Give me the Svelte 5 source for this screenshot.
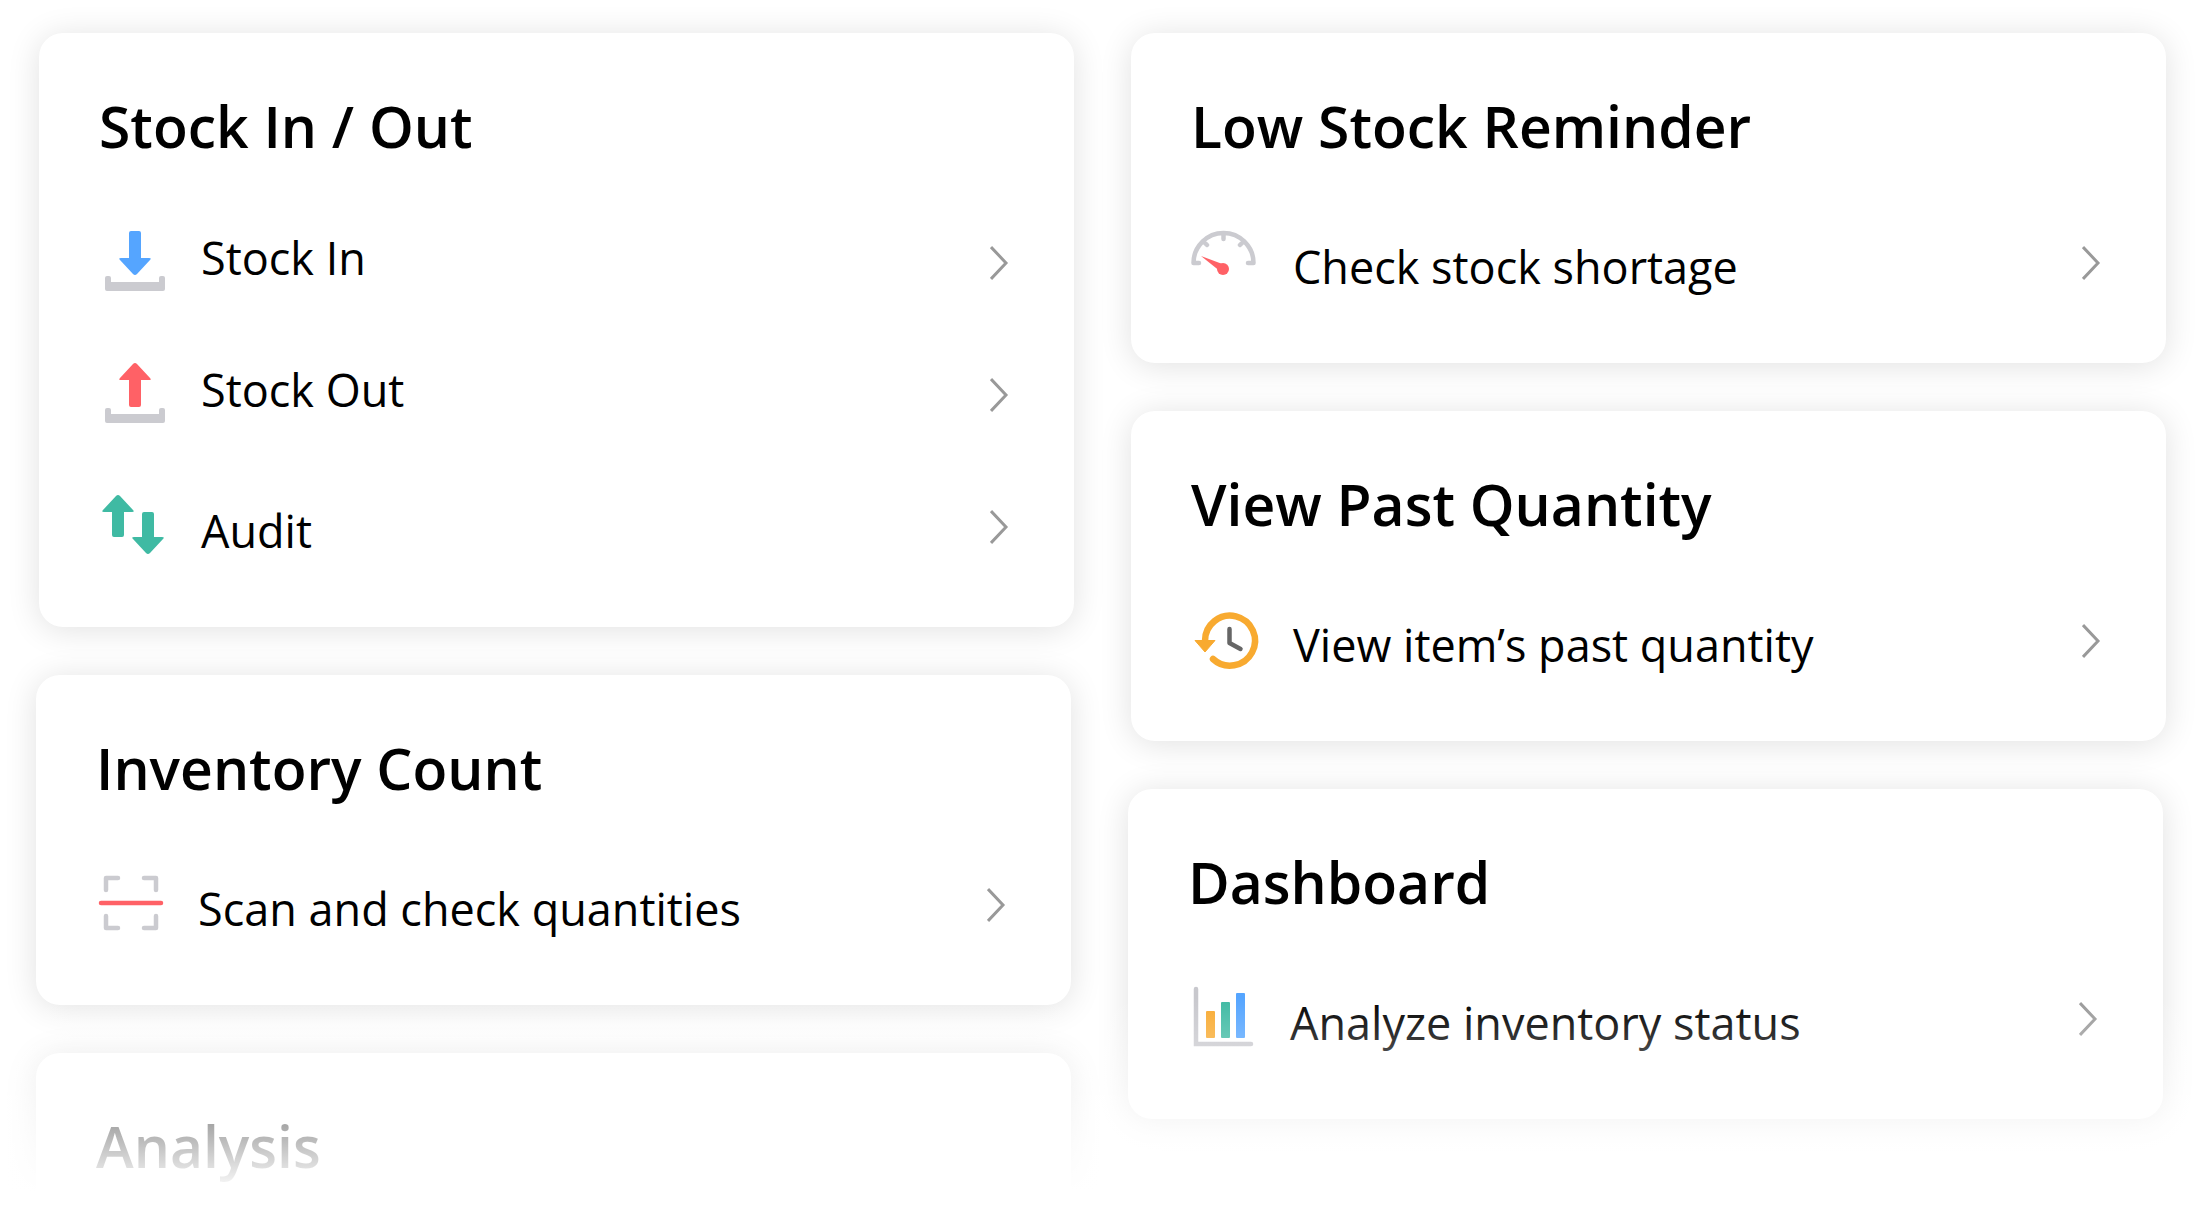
<script lang="ts">
  type Row = { icon: string; label: string; raised?: boolean };
  type Card = { title: string; shifted?: boolean; rows: Row[] };

  const columns: Card[][] = [
    [
      {
        title: 'Stock In / Out',
        rows: [
          { icon: 'in', label: 'Stock In', raised: true },
          { icon: 'out', label: 'Stock Out', raised: true },
          { icon: 'audit', label: 'Audit' },
        ],
      },
      { title: 'Inventory Count', shifted: true, rows: [{ icon: 'scan', label: 'Scan and check quantities' }] },
      { title: 'Analysis', shifted: true, rows: [] },
    ],
    [
      { title: 'Low Stock Reminder', rows: [{ icon: 'gauge', label: 'Check stock shortage' }] },
      { title: 'View Past Quantity', rows: [{ icon: 'history', label: 'View item’s past quantity' }] },
      { title: 'Dashboard', shifted: true, rows: [{ icon: 'chart', label: 'Analyze inventory status' }] },
    ],
  ];
</script>

<main>
  {#each columns as cards}
    <div class="column">
      {#each cards as card}
        <section class="card" class:shifted={card.shifted}>
          <h2>{card.title}</h2>
          {#each card.rows as row}
            <button type="button" class="row">
              <svg class="icon" viewBox="0 0 72 72" aria-hidden="true">
                {#if row.icon === 'in'}
                  <path fill="#55a5ff" d="M30 6q0-2 2-2h8q2 0 2 2v25h8q3 0 1 2L38 47q-2 2-4 0L21 33q-2-2 1-2h8z" />
                  <path fill="#cbcbd0" d="M8 49h2q2 0 2 2v4h48v-4q0-2 2-2h2q2 0 2 2v11q0 2-2 2H8q-2 0-2-2V51q0-2 2-2z" />
                {:else if row.icon === 'out'}
                  <path fill="#ff6166" d="M30 46q0 2 2 2h8q2 0 2-2V21h8q3 0 1-2L38 5q-2-2-4 0L21 19q-2 2 1 2h8z" />
                  <path fill="#cbcbd0" d="M8 49h2q2 0 2 2v4h48v-4q0-2 2-2h2q2 0 2 2v11q0 2-2 2H8q-2 0-2-2V51q0-2 2-2z" />
                {:else if row.icon === 'audit'}
                  <path fill="#3fbaa3" d="M13 44q0 2 2 2h8q2 0 2-2V21h8q3 0 1-2L21 5q-2-2-4 0L4 19q-2 2 1 2h8z" />
                  <path fill="#3fbaa3" d="M43 23q0-2 2-2h8q2 0 2 2v23h8q3 0 1 2L51 62q-2 2-4 0L34 48q-2-2 1-2h8z" />
                {:else if row.icon === 'scan'}
                  <path
                    d="M10 21V9h12M48 9h12v12M10 47v12h12M48 59h12V47"
                    fill="none"
                    stroke="#cbcbd0"
                    stroke-width="4.5"
                    stroke-linecap="round"
                    stroke-linejoin="round"
                  />
                  <path d="M5 34h60" stroke="#ff6166" stroke-width="4.5" stroke-linecap="round" />
                {:else if row.icon === 'gauge'}
                  <path
                    d="M8 36H2.500a30 30 0 0 1 60 0H57M32.500 6v6M12 14l4 4M53 14l-4 4"
                    fill="none"
                    stroke="#cbcbd0"
                    stroke-width="4.5"
                    stroke-linecap="round"
                    stroke-linejoin="round"
                  />
                  <path fill="#ff6166" d="M10 29l24 9-4 7z" />
                  <circle cx="32" cy="42" r="6" fill="#ff6166" />
                {:else if row.icon === 'history'}
                  <path d="M14 36a25 25 0 1 1 8 18" fill="none" stroke="#f8aa30" stroke-width="6.5" stroke-linecap="round" />
                  <path fill="#f8aa30" stroke="#f8aa30" stroke-linejoin="round" d="M4 35.500h20L14 47z" />
                  <path
                    d="M38.500 24v14l11 6"
                    fill="none"
                    stroke="#666"
                    stroke-width="4.5"
                    stroke-linecap="round"
                    stroke-linejoin="round"
                  />
                {:else if row.icon === 'chart'}
                  <path d="M8 6v55h55" fill="none" stroke="#c8c8cd" stroke-width="4.5" stroke-linecap="round" />
                  <rect x="18" y="28" width="9" height="27" rx="1" fill="#f8aa30" />
                  <rect x="33" y="19" width="9" height="36" rx="1" fill="#3fbaa3" />
                  <rect x="48" y="10" width="9" height="45" rx="1" fill="#55a5ff" />
                {/if}
              </svg>
              <span class="label" class:raised={row.raised}>{row.label}</span>
              <svg class="chevron" viewBox="0 0 24 36" aria-hidden="true">
                <path d="M1 2l15 16L1 34" />
              </svg>
            </button>
          {/each}
        </section>
      {/each}
    </div>
  {/each}
  <div class="fade"></div>
</main>

<style>
  :global(body) {
    background: #fff;
  }

  main {
    position: relative;
    box-sizing: border-box;
    height: 100vh;
    overflow: hidden;
    display: grid;
    grid-template-columns: 1fr 1fr;
    column-gap: 57px;
    padding: 33px 36px 0 39px;
    font-family: 'Open Sans', 'Noto Sans', sans-serif;
    color: #000;
  }

  .column {
    display: flex;
    flex-direction: column;
    gap: 48px;
  }

  .card {
    padding-bottom: 34px;
    border-radius: 24px;
    background: #fff;
    box-shadow: 0 3px 33px rgba(0, 0, 0, 0.12);
  }

  .shifted {
    margin: 0 3px 0 -3px;
  }

  h2 {
    margin: 0;
    padding: 53px 60px 31px;
    font-size: 57px;
    line-height: 80px;
    font-weight: 600;
  }

  .row {
    display: flex;
    align-items: center;
    gap: 30px;
    width: 100%;
    height: 132px;
    padding: 0 60px;
    border: 0;
    background: none;
    font: inherit;
    font-size: 45px;
    line-height: 60px;
    color: inherit;
    text-align: left;
  }

  .icon {
    width: 72px;
    height: 72px;
    flex: none;
  }

  .label {
    flex: 1;
    padding-top: 8px;
  }

  .raised {
    padding: 0 0 10px;
  }

  .chevron {
    width: 24px;
    height: 36px;
    flex: none;
    fill: none;
    stroke: #999;
    stroke-width: 3;
  }

  .fade {
    position: absolute;
    inset: auto 0 0;
    height: 212px;
    background: linear-gradient(rgba(255, 255, 255, 0), #fff 92%);
    pointer-events: none;
  }
</style>
